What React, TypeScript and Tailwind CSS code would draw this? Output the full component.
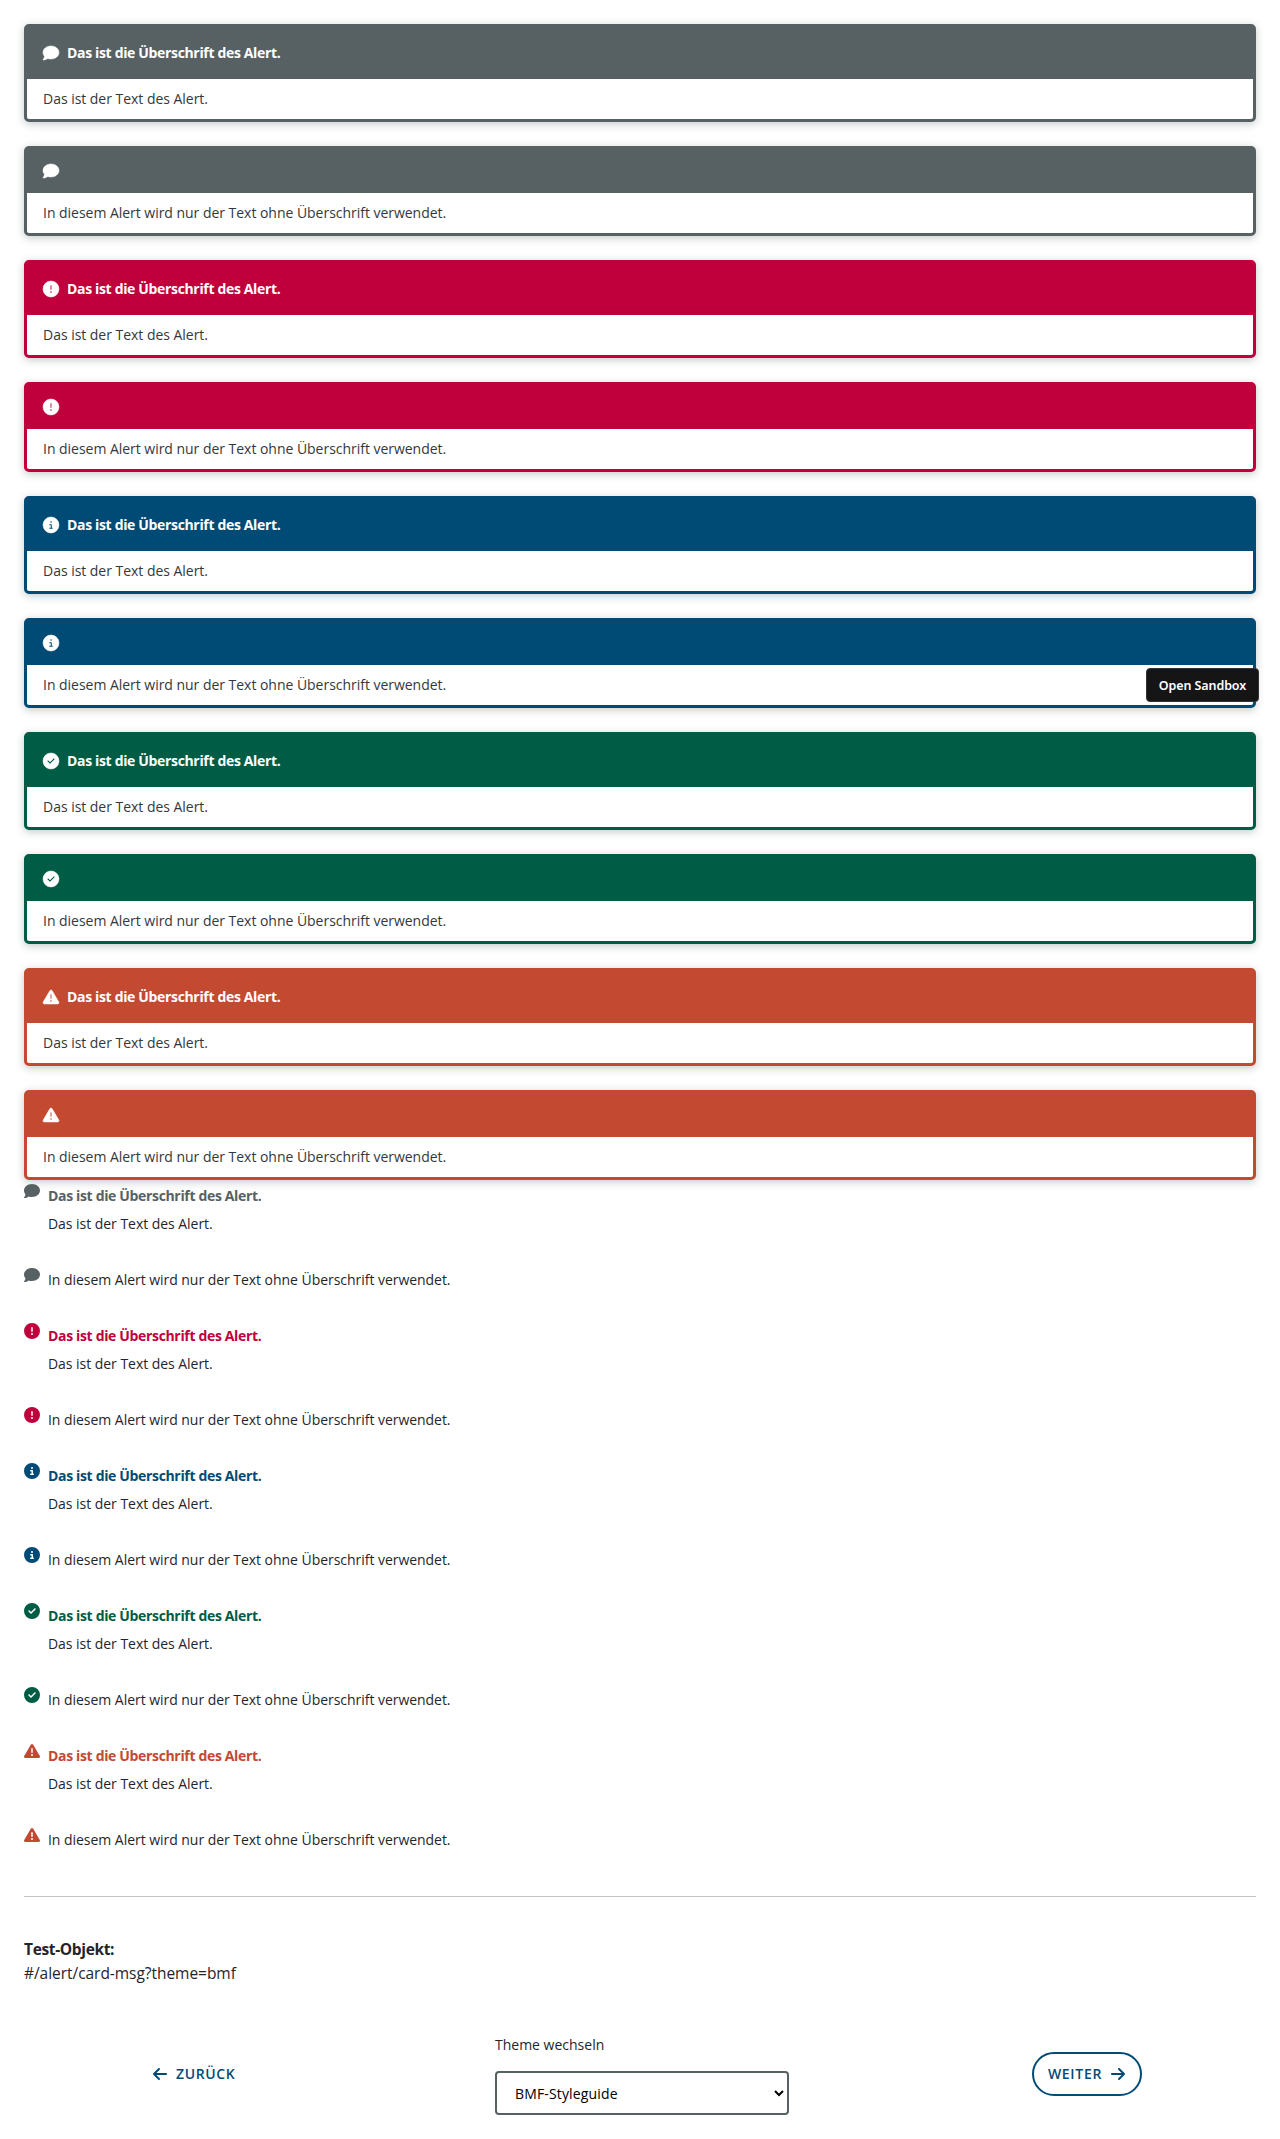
import type { IconType } from "react-icons";
import {
  FaArrowLeft,
  FaArrowRight,
  FaCircleCheck,
  FaCircleExclamation,
  FaCircleInfo,
  FaComment,
  FaTriangleExclamation,
} from "react-icons/fa6";

type Variant = {
  name: string;
  icon: IconType;
  card: string;
  text: string;
};

const variants: Variant[] = [
  { name: "neutral", icon: FaComment, card: "border-[#576164] bg-[#576164]", text: "text-[#576164]" },
  { name: "error", icon: FaCircleExclamation, card: "border-[#c0003c] bg-[#c0003c]", text: "text-[#c0003c]" },
  { name: "info", icon: FaCircleInfo, card: "border-[#004b76] bg-[#004b76]", text: "text-[#004b76]" },
  { name: "success", icon: FaCircleCheck, card: "border-[#005c45] bg-[#005c45]", text: "text-[#005c45]" },
  { name: "warning", icon: FaTriangleExclamation, card: "border-[#c34931] bg-[#c34931]", text: "text-[#c34931]" },
];

const HEADING = "Das ist die Überschrift des Alert.";
const TEXT = "Das ist der Text des Alert.";
const TEXT_ONLY = "In diesem Alert wird nur der Text ohne Überschrift verwendet.";

function CardAlert({ variant, heading, text }: { variant: Variant; heading?: string; text: string }) {
  const Icon = variant.icon;
  return (
    <section className={`rounded-[5px] border-3 shadow-[0_2px_8px_rgba(40,55,60,0.27)] ${variant.card}`}>
      <header className={`flex items-center pl-4 text-white ${heading ? "h-[52px]" : "h-11"}`}>
        <Icon className="size-4 overflow-visible stroke-white [stroke-width:16]" />
        {heading && <h2 className="ml-2 font-bold tracking-[-0.34px]">{heading}</h2>}
      </header>
      <p className="flex h-10 items-center rounded-b-[2px] bg-white pl-4 tracking-[-0.03px] text-[#33383c]">{text}</p>
    </section>
  );
}

function MessageAlert({ variant, heading, text }: { variant: Variant; heading?: string; text: string }) {
  const Icon = variant.icon;
  return (
    <section className="mb-7 flex items-start gap-2 leading-7">
      <Icon className={`mt-px size-4 ${variant.text}`} />
      <div>
        {heading && <h2 className={`font-bold tracking-[-0.34px] ${variant.text}`}>{heading}</h2>}
        <p className="tracking-[-0.04px]">{text}</p>
      </div>
    </section>
  );
}

export default function App() {
  return (
    <div className="relative h-[2139px] overflow-hidden bg-white px-6 pt-6 font-['Open_Sans',sans-serif] text-sm text-[#1f252b]">
      <div className="flex flex-col gap-6">
        {variants.map((v) => (
          <div key={v.name} className="flex flex-col gap-6">
            <CardAlert variant={v} heading={HEADING} text={TEXT} />
            <CardAlert variant={v} text={TEXT_ONLY} />
          </div>
        ))}
      </div>

      <div className="pt-0.5">
        {variants.map((v) => (
          <div key={v.name}>
            <MessageAlert variant={v} heading={HEADING} text={TEXT} />
            <MessageAlert variant={v} text={TEXT_ONLY} />
          </div>
        ))}
      </div>

      <footer className="mt-[42px] border-t border-[#c4c4c4] pt-10">
        <div className="text-[15.5px] leading-6">
          <p className="font-bold tracking-[-0.35px]">Test-Objekt:</p>
          <p className="tracking-[-0.04px]">#/alert/card-msg?theme=bmf</p>
        </div>

        <div className="mt-12 grid grid-cols-[471px_294px_1fr] items-center">
          <button className="ml-[128px] flex h-11 items-center gap-2 justify-self-start font-semibold tracking-[0.6px] text-[#004b76]">
            <FaArrowLeft className="size-4" />
            ZURÜCK
          </button>
          <div className="flex flex-col">
            <label htmlFor="theme" className="mb-3.5 leading-6">
              Theme wechseln
            </label>
            <select
              id="theme"
              className="h-11 rounded border-2 border-[#576164] bg-white pl-3.5 tracking-[0.15px] text-black"
            >
              <option>BMF-Styleguide</option>
            </select>
          </div>
          <button className="ml-[243px] flex h-11 w-[110px] items-center justify-center gap-2 rounded-full border-2 border-[#004b76] font-semibold tracking-[0.7px] text-[#004b76]">
            WEITER
            <FaArrowRight className="size-4" />
          </button>
        </div>
      </footer>

      <button className="absolute top-[668px] left-[1146px] h-[34px] w-[113px] rounded border border-[#333] bg-[#151515] pt-0.5 font-['Noto_Sans',sans-serif] text-[12.5px] font-semibold tracking-[-0.1px] text-white">
        Open Sandbox
      </button>
    </div>
  );
}
